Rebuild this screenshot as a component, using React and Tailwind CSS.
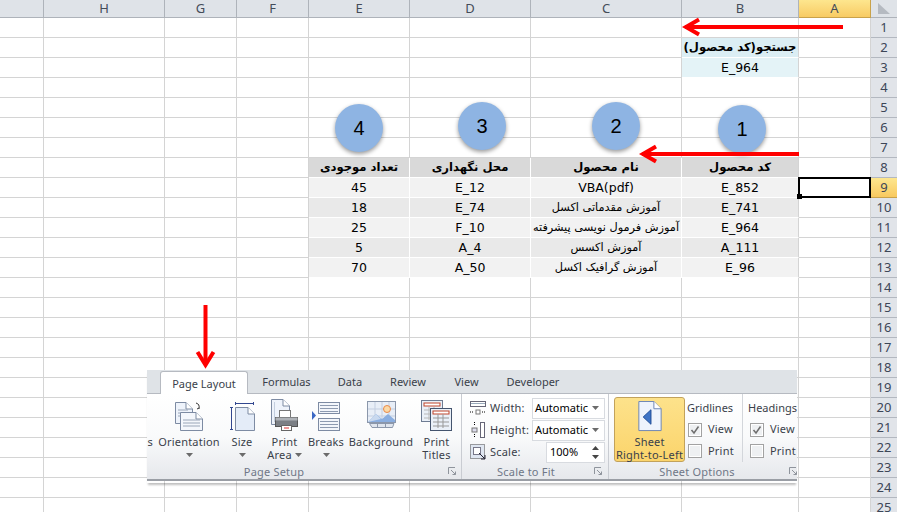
import React from "react";

const colW = ["w-[44px]","w-[121px]","w-[72px]","w-[72px]","w-[101px]","w-[121px]","w-[151px]","w-[117px]","w-[72px]"];
const colNames = ["","H","G","F","E","D","C","B","A"];
const head = ["تعداد موجودی","محل نگهداری","نام محصول","کد محصول"];
const data = [
  ["45","E_12","VBA(pdf)","E_852"],
  ["18","E_74","آموزش مقدماتی اکسل","E_741"],
  ["25","F_10","آموزش فرمول نویسی پیشرفته","E_964"],
  ["5","A_4","آموزش اکسس","A_111"],
  ["70","A_50","آموزش گرافیک اکسل","E_96"],
];
const rowBg = ["bg-[#f2f2f2]","bg-[#e9e9e9]","bg-[#f2f2f2]","bg-[#e9e9e9]","bg-[#f2f2f2]"];
const isArabic = (t) => /[\u0600-\u06ff]/.test(t);

function rowCells(r) {
  const cells = Array(9).fill(null);
  if (r === 2) cells[7] = { t: "جستجو(کد محصول)", bg: "bg-[#dbeef4]", b: true };
  if (r === 3) cells[7] = { t: "E_964", bg: "bg-[#e4f3f7]" };
  if (r === 8) head.forEach((t, i) => (cells[4 + i] = { t, bg: "bg-[#d9d9d9]", b: true }));
  if (r >= 9 && r <= 13) data[r - 9].forEach((t, i) => (cells[4 + i] = { t, bg: rowBg[r - 9] }));
  return cells;
}

function textSize(c) {
  if (!c || !isArabic(c.t)) return "text-[12.5px]";
  return c.b ? "text-[11.6px]" : "text-[11.3px]";
}

function Row({ r }) {
  const cells = rowCells(r);
  const active = r === 9;
  return (
    <div className="flex h-[20px]">
      {colW.map((w, i) => {
        const c = cells[i];
        return (
          <div key={i} className={`${w} shrink-0 h-full flex items-center justify-center pt-[1px] border-b border-r leading-none text-black ${textSize(c)} ${c ? `${c.bg} ${c.b ? "font-bold" : ""} border-white` : "border-[#d4d4d4]"} ${c && i === 7 ? "border-r-[#d4d4d4]" : ""}`}>
            {c ? <span dir="rtl" className="whitespace-nowrap">{c.t}</span> : null}
          </div>
        );
      })}
      <div className={`flex-1 h-full flex items-center justify-center border-b text-[13px] leading-none text-[#3c4657] font-['Noto_Sans',sans-serif] ${active ? "bg-gradient-to-b from-[#fde68e] to-[#f8c95f] border-[#c9a24a]" : "bg-[#e1e4e9] border-[#b3b8c0]"}`}>{r}</div>
    </div>
  );
}

const Arrow = ({ x1, x2, y }) => (
  <svg className="absolute left-0 top-0 pointer-events-none" width="897" height="512">
    <g stroke="#ff0000" fill="none">
      <path d={`M${x1} ${y}H${x2 + 2}`} strokeWidth="4" />
      <path d={`M${x2 + 16} ${y - 7.5}L${x2 + 3} ${y}L${x2 + 16} ${y + 7.5}`} strokeWidth="4" />
    </g>
  </svg>
);

const Circle = ({ n, x, y }) => (
  <div className={`absolute flex items-center justify-center w-[48px] h-[48px] rounded-full bg-[#8eb4e3] shadow-[0_2px_4px_rgba(0,0,0,0.4)] text-[20px] text-black font-['Liberation_Sans',sans-serif] ${x} ${y}`}>{n}</div>
);

const Page = ({ x = 0, y = 0, w = 22, h = 27, fold = 7, fill = "#eef3fb" }) => (
  <g transform={`translate(${x} ${y})`}>
    <path d={`M.5 .5H${w - fold}L${w - 0.5} ${fold}V${h - 0.5}H.5Z`} fill={fill} stroke="#7d8ba3" />
    <path d={`M${w - fold} .5V${fold}H${w - 0.5}`} fill="#fff" stroke="#7d8ba3" />
  </g>
);

const IconOrient = () => (
  <svg width="28" height="29" viewBox="0 0 28 29">
    <Page x={0} y={0} w={18} h={22} />
    <path d="M3 8H13M3 11H13M3 14H8" stroke="#9aa6b8" />
    <Page x={5} y={10} w={23} h={19} fill="#f4f7fc" />
    <path d="M8 18H25M8 21H25M8 24H25" stroke="#9aa6b8" />
    <path d="M21 1Q25 2 24 7M22 7L24 6" stroke="#333" fill="none" />
  </svg>
);
const IconSize = () => (
  <svg width="25" height="29" viewBox="0 0 25 29">
    <path d="M5 1.500H24M5.500 0V3M23.500 0V3" stroke="#32478f" />
    <path d="M1.500 5V28M0 5.500H3M0 27.500H3" stroke="#32478f" />
    <Page x={5} y={5} w={20} h={24} fill="#e4ecf8" />
  </svg>
);
const IconPrint = () => (
  <svg width="27" height="32" viewBox="0 0 27 32">
    <Page x={0} y={0} w={19} h={26} />
    <path d="M3.500 3V23" stroke="#c3cede" />
    <rect x="8.500" y="11.500" width="11" height="8" fill="#fff" stroke="#777" />
    <rect x="4.500" y="18.500" width="22" height="9" fill="#7b7f85" stroke="#555" />
    <rect x="4.500" y="18.500" width="22" height="3" fill="#aeb2b7" />
    <rect x="10.500" y="26.500" width="10" height="5" fill="#fff" stroke="#666" />
    <path d="M13 29H18" stroke="#d33" />
  </svg>
);
const IconBreaks = () => (
  <svg width="28" height="29" viewBox="0 0 28 29">
    <rect x="6.500" y=".5" width="21" height="11" fill="#f3f6fb" stroke="#7d8ba3" />
    <path d="M8 3.500H26M8 6.500H26M8 9.500H26" stroke="#8d9ab0" />
    <rect x="6.500" y="16.500" width="21" height="12" fill="#f3f6fb" stroke="#7d8ba3" />
    <path d="M8 19.500H26M8 22.500H26M8 25.500H26" stroke="#8d9ab0" />
    <path d="M0 9V18L4 13.500Z" fill="#3c68c4" />
  </svg>
);
const IconBg = () => (
  <svg width="29" height="27" viewBox="0 0 29 27" className="mb-[3px]">
    <rect x=".5" y=".5" width="28" height="21" fill="#e8eef7" stroke="#8b97ab" />
    <path d="M8 1V21M15 1V21M22 1V21M1 8H28M1 15H28" stroke="#c3cee0" />
    <circle cx="20" cy="8" r="3.500" fill="#fcd9a6" stroke="#e8894a" />
    <path d="M1 21L9 13L15 18L21 13L28 19V21Z" fill="#8aaee0" />
    <path d="M1 21L9 13L14 18Z" fill="#c9d9ef" />
    <path d="M2.500 22.500H27L25.500 26.500H5Z" fill="#dfe5ee" stroke="#8b97ab" />
    <path d="M10.500 23V26M18.500 23V26" stroke="#8b97ab" />
  </svg>
);
const IconTitles = () => (
  <svg width="31" height="31" viewBox="0 0 31 31">
    <rect x=".5" y=".5" width="21" height="21" fill="#eaf0f8" stroke="#6e7c93" />
    <rect x="3" y="3" width="16" height="3" fill="#fff" stroke="#c0442a" />
    <path d="M3 10H19M3 14H19M3 18H19M8 7V20M13 7V20" stroke="#b8b8b8" />
    <rect x="9.500" y="8.500" width="21" height="22" fill="#eaf0f8" stroke="#44546e" />
    <rect x="12" y="11" width="16" height="3" fill="#fff" stroke="#c0442a" />
    <path d="M12 18H28M12 22H28M12 26H28M17 14V28M22 14V28" stroke="#999" />
  </svg>
);
const Caret = ({ cls = "" }) => (
  <svg width="7" height="4" viewBox="0 0 7 4" className={`inline-block ${cls}`}><path d="M0 0H7L3.500 4Z" fill="#6b6b6b" /></svg>
);
const Launcher = ({ cls }) => (
  <svg width="8" height="8" viewBox="0 0 8 8" className={`absolute bottom-[4px] ${cls}`}>
    <path d="M.5 7V.5H7" stroke="#8f949c" fill="none" />
    <path d="M3 3L7.500 7.500M7.500 4.500V7.500H4.500" stroke="#8f949c" fill="none" />
  </svg>
);

const Big = ({ w, icon, top, bottom, caret }) => (
  <div className={`${w} shrink-0 flex flex-col items-center`}>
    <div className="h-[37px] flex items-end justify-center">{icon}</div>
    <div className="h-[13px] mt-[4px] leading-[13px] whitespace-nowrap">{top}</div>
    <div className="h-[13px] leading-[13px] whitespace-nowrap flex items-center gap-[3px]">{bottom}{caret && <Caret />}</div>
  </div>
);

const Group = ({ w, label, labelCls, launchCls, children, last }) => (
  <div className={`${w} shrink-0 relative flex flex-col ${last ? "" : "border-r border-[#c9ccd2]"}`}>
    <div className="flex-1 flex min-h-0">{children}</div>
    <div className={`h-[15px] pt-[1px] text-center leading-[13px] text-[#6f7787] ${labelCls}`}>{label}</div>
    <Launcher cls={launchCls} />
  </div>
);

const Check = ({ on }) => (
  <div className="w-[14px] h-[14px] border border-[#a2a2a2] bg-[#eef0f2] flex items-center justify-center shadow-[inset_0_0_0_1px_#fff]">
    {on && <svg width="10" height="10" viewBox="0 0 10 10"><path d="M1.500 5L4 8L8.500 1.500" stroke="#6e6e6e" strokeWidth="1.500" fill="none" /></svg>}
  </div>
);

const ScaleRow = ({ icon, label, value, kind }) => (
  <div className="h-[22px] flex items-center">
    <div className="w-[6px] shrink-0" />
    <div className="w-[20px] shrink-0 flex justify-center">{icon}</div>
    <div className="w-[40px] shrink-0 ml-[2px]">{label}</div>
    <div className={`h-[21px] border border-[#d8dbe0] bg-white flex items-center tracking-normal ${kind === "spin" ? "ml-[16px] w-[59px] pl-[3px]" : "ml-[2px] w-[73px] pl-[2px]"}`}>
      <span className="flex-1 text-black">{value}</span>
      {kind === "spin" ? (
        <svg width="7" height="13" viewBox="0 0 7 13" className="mr-[5px]"><path d="M0 4H7L3.500 0ZM0 9H7L3.500 13Z" fill="#444" /></svg>
      ) : <Caret cls="mr-[5px]" />}
    </div>
  </div>
);

const OptionCol = ({ w, title, sep, titleCls, rowCls }) => (
  <div className={`${w} shrink-0 flex flex-col pt-[3px] h-[68px] ${sep ? "border-r border-[#d3d6db]" : ""}`}>
    <div className={`h-[22px] flex items-center whitespace-nowrap tracking-normal ${titleCls}`}>{title}</div>
    <div className={`h-[22px] flex items-center gap-[6px] ${rowCls}`}><Check on /><span>View</span></div>
    <div className={`h-[22px] flex items-center gap-[6px] ${rowCls}`}><Check /><span>Print</span></div>
  </div>
);

function Ribbon() {
  const tabs = [["Formulas","w-[77px]"],["Data","w-[50px]"],["Review","w-[66px]"],["View","w-[51px]"],["Developer","w-[82px]"]];
  return (
    <div className="absolute left-[147px] top-[370px] w-[650px] h-[113px] flex flex-col text-[11px] text-[#3a3f4a] shadow-[0_3px_2px_-1px_rgba(0,0,0,0.25)] font-['Noto_Sans',sans-serif] tracking-[0.2px]">
      <div className="h-[24px] bg-[#dfe3e7] flex items-end pl-[13px] border-b border-[#b6bac1] tracking-normal">
        <div className="w-[88px] h-[23px] pt-[2px] -mb-px bg-white border border-b-0 border-[#b6bac1] rounded-t-[3px] flex items-center justify-center">Page Layout</div>
        {tabs.map(([t, w]) => <div key={t} className={`${w} h-[23px] pt-[2px] flex items-center justify-center`}>{t}</div>)}
      </div>
      <div className="h-[87px] bg-gradient-to-b from-white via-[#f9fafb] to-[#e6e8ec] flex border-b-2 border-[#9a9ea5]">
        <Group w="w-[315px]" label="Page Setup" labelCls="pr-[60px]" launchCls="right-[5px]">
          <div className="w-[11px] shrink-0 flex flex-col items-start"><div className="h-[41px]" /><div className="w-[6px] overflow-hidden flex justify-end leading-[13px]"><span>s</span></div></div>
          <Big w="w-[62px]" icon={<IconOrient />} top="Orientation" bottom={<Caret />} />
          <Big w="w-[44px]" icon={<IconSize />} top="Size" bottom={<Caret />} />
          <Big w="w-[41px]" icon={<IconPrint />} top="Print" bottom="Area" caret />
          <Big w="w-[42px]" icon={<IconBreaks />} top="Breaks" bottom={<Caret />} />
          <Big w="w-[68px]" icon={<IconBg />} top="Background" />
          <Big w="w-[43px]" icon={<IconTitles />} top="Print" bottom="Titles" />
        </Group>
        <Group w="w-[147px]" label="Scale to Fit" labelCls="pr-[18px]" launchCls="right-[6px]">
          <div className="flex flex-col pt-[3px]">
            <ScaleRow label="Width:" value="Automatic" icon={<svg width="16" height="14" viewBox="0 0 16 14"><rect x=".5" y=".5" width="15" height="5" fill="#fff" stroke="#667" /><path d="M1 2.500H15" stroke="#9ab" /><rect x="6" y="9" width="4" height="4" fill="#fff" stroke="#777" /><path d="M0 11H4M12 11H16" stroke="#000" strokeDasharray="1 1" /></svg>} />
            <ScaleRow label="Height:" value="Automatic" icon={<svg width="14" height="16" viewBox="0 0 14 16"><rect x="9.500" y=".5" width="4" height="15" fill="#fff" stroke="#667" /><rect x="1" y="6" width="5" height="4" fill="#dde" stroke="#777" /><path d="M3.500 0V4M3.500 12V16" stroke="#000" strokeDasharray="1 1" /></svg>} />
            <ScaleRow label="Scale:" value="100%" kind="spin" icon={<svg width="16" height="16" viewBox="0 0 16 16"><rect x=".5" y=".5" width="14" height="14" fill="#dfe6f1" stroke="#444" strokeDasharray="1 1" /><rect x="3.500" y="3.500" width="7" height="7" fill="#fff" stroke="#778" /><path d="M9 9L15 15M15 11V15H11" stroke="#223" fill="none" /></svg>} />
          </div>
        </Group>
        <Group w="w-[188px]" label="Sheet Options" labelCls="pr-[12px]" launchCls="right-0" last>
          <div className="w-[71px] h-[65px] ml-[5px] mt-[3px] shrink-0 rounded-[3px] border border-[#c2a25b] bg-gradient-to-b from-[#fde28b] to-[#fbd46b] flex flex-col items-center">
            <svg width="24" height="33" viewBox="0 0 24 33" className="mt-[3px]">
              <path d="M.5 .5H16L23.500 8V30.500H.5Z" fill="#eef3fc" stroke="#6c85b5" />
              <path d="M16 .5V8H23.500" fill="#fff" stroke="#6c85b5" />
              <path d="M13 9V24L5 16.500Z" fill="#3f74c6" stroke="#1f4c96" />
            </svg>
            <div className="mt-[2px] h-[13px] leading-[13px]">Sheet</div>
            <div className="h-[13px] leading-[13px] whitespace-nowrap">Right-to-Left</div>
          </div>
          <OptionCol w="w-[58px]" title="Gridlines" titleCls="pl-[2px]" rowCls="pl-[3px]" sep />
          <OptionCol w="w-[54px]" title="Headings" titleCls="pl-[5px]" rowCls="pl-[7px]" />
        </Group>
      </div>
    </div>
  );
}

export default function App() {
  const rows = Array.from({ length: 25 }, (_, i) => i + 1);
  return (
    <div className="relative w-[897px] h-[512px] overflow-hidden bg-white font-['DejaVu_Sans','Noto_Sans',sans-serif]">
      <div className="flex h-[18px] bg-[#dfe3e8] border-b border-[#aeb3ba] text-[13px] text-[#444c59] font-['Noto_Sans',sans-serif]">
        {colW.map((w, i) => (
          <div key={i} className={`${w} shrink-0 flex items-center justify-center border-r border-[#aeb3ba] ${i === 8 ? "bg-gradient-to-b from-[#fde68e] to-[#f8cb63] -mb-px border-b border-[#c9a24a]" : ""}`}>{colNames[i]}</div>
        ))}
        <div className="flex-1 flex items-center justify-center">
          <svg width="14" height="12" viewBox="0 0 14 12"><path d="M1 11H13V0Z" fill="#b5bac1" transform="matrix(-1 0 0 1 14 0)" /></svg>
        </div>
      </div>
      {rows.map((r) => <Row key={r} r={r} />)}

      <Circle n="1" x="left-[718px]" y="top-[105px]" />
      <Circle n="2" x="left-[592px]" y="top-[102px]" />
      <Circle n="3" x="left-[458px]" y="top-[102px]" />
      <Circle n="4" x="left-[335px]" y="top-[104px]" />

      <Arrow x1={843} x2={683} y={27} />
      <Arrow x1={799} x2={640} y={154} />
      <svg className="absolute left-0 top-0 pointer-events-none" width="897" height="512">
        <path d="M205.500 305V364" stroke="#ff0000" strokeWidth="4" />
        <path d="M197.500 352L205.500 365L213.500 352" fill="none" stroke="#ff0000" strokeWidth="4" />
      </svg>

      <div className="absolute left-[798px] top-[177px] w-[73px] h-[21px] border-2 border-black">
        <div className="absolute -left-[3px] -bottom-[3px] w-[5px] h-[5px] bg-black" />
      </div>

      <Ribbon />
    </div>
  );
}
